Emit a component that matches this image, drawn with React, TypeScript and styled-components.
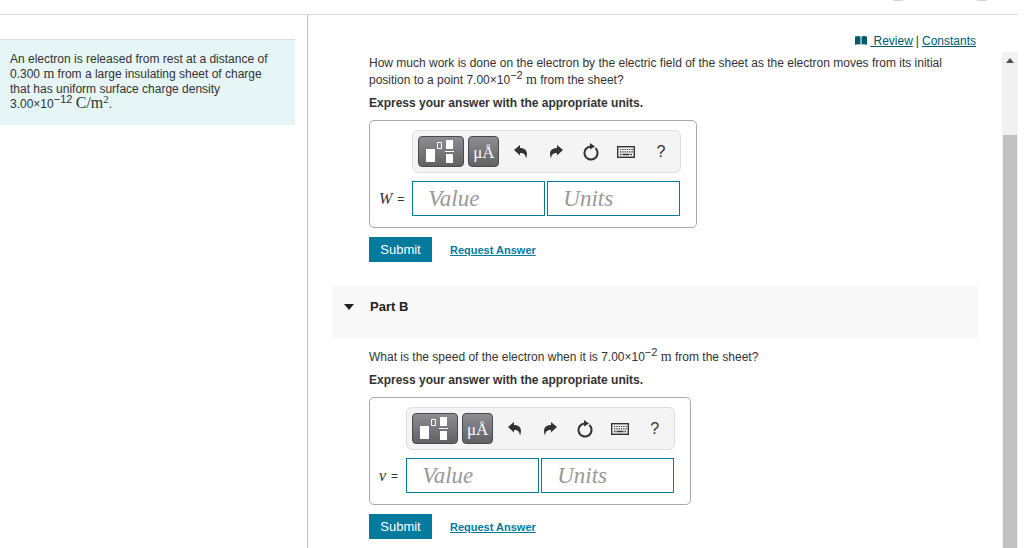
import React from "react";
import styled, { createGlobalStyle } from "styled-components";

const Global = createGlobalStyle`
  *, *::before, *::after { box-sizing: border-box; }
  html, body, #root { height: 100%; }
  body {
    margin: 0;
    overflow: hidden;
    background: #fff;
    color: #333;
    font: 12px/16px "Liberation Sans", Arial, sans-serif;
  }
`;

const Page = styled.div`
  display: flex;
  flex-direction: column;
  height: 100vh;
  padding-right: 6px;
`;

const TopBar = styled.header`
  display: flex;
  justify-content: flex-end;
  align-items: flex-start;
  gap: 74px;
  flex: none;
  height: 15px;
  padding-right: 31px;
  border-bottom: 1px solid #dcdcdc;
`;

const TopMark = styled.span`
  width: 10px;
  height: 1px;
  border-radius: 0 0 4px 4px;
  background: #d4d4d4;
`;

const Columns = styled.div`
  display: flex;
  flex: 1;
  min-height: 0;
`;

const Sidebar = styled.aside`
  flex: 0 0 308px;
  padding: 24px 12px 0 0;
  border-right: 1px solid #b9c3d3;
`;

const Problem = styled.p`
  margin: 0;
  padding: 12px 10px 13px;
  border-top: 1px solid #d8dede;
  background: #e6f5f6;
  line-height: 15px;
`;

const Main = styled.main`
  display: flex;
  flex-direction: column;
  flex: 1;
  min-width: 0;
`;

const Links = styled.nav`
  display: flex;
  align-items: center;
  justify-content: flex-end;
  gap: 3px;
  flex: none;
  height: 37px;
  padding: 14px 42px 0 0;
`;

const RefLink = styled.a`
  color: #005a70;
  white-space: pre;
`;

const ScrollArea = styled.div`
  display: flex;
  flex: 1;
  min-height: 0;
`;

const Content = styled.div`
  flex: 1;
  min-width: 0;
  padding: 0 24px;
  overflow: hidden;
`;

const Track = styled.div`
  display: flex;
  flex-direction: column;
  align-items: center;
  flex: none;
  width: 16px;
  padding-top: 6px;
  background: #f1f1f1;
`;

const Thumb = styled.div`
  flex: 1;
  width: 14px;
  margin-top: 72px;
  background: #c1c1c1;
`;

const Part = styled.section<{ $first?: boolean }>`
  padding: ${(p) => (p.$first ? 3 : 11)}px 0 24px 37px;
`;

const PartHeader = styled.h2`
  display: flex;
  align-items: flex-start;
  gap: 16px;
  height: 52px;
  margin: 0;
  padding: 13px 12px;
  background: #f8f8f8;
  color: #222;
  font-size: 13px;
  line-height: 16px;
`;

const Toggle = styled.button`
  display: flex;
  align-items: center;
  height: 16px;
  padding: 0;
  border: 0;
  background: none;
`;

const Question = styled.p`
  margin: 0 0 6px;
  line-height: 17px;
`;

const Instruction = styled.p`
  margin: 0 0 9px;
  font-weight: bold;
`;

const Unit = styled.span<{ $size?: number }>`
  font-family: "Liberation Serif", "Times New Roman", serif;
  font-size: ${(p) => p.$size ?? 14}px;
  line-height: 1px;
`;

const Sup = styled.sup`
  font-size: 11px;
  line-height: 1px;
  vertical-align: 5px;
`;

const AnswerBox = styled.div`
  display: flex;
  align-items: flex-end;
  width: fit-content;
  padding: 9px 15px 11px 9px;
  border: 1px solid #a9a9a9;
  border-radius: 5px;
`;

const Variable = styled.span`
  display: flex;
  align-items: center;
  gap: 5px;
  height: 35px;
  padding-right: 8px;
`;

const Italic = styled.i`
  font-family: "Liberation Serif", "Times New Roman", serif;
  font-size: 16px;
`;

const Entry = styled.div`
  display: flex;
  flex-direction: column;
  gap: 8px;
`;

const Toolbar = styled.div`
  display: flex;
  align-items: center;
  height: 43px;
  padding: 0 2px 0 5px;
  border: 1px solid #dedede;
  border-radius: 6px;
  background: #f4f4f4;
`;

const DarkButton = styled.button<{ $wide?: boolean }>`
  display: flex;
  align-items: center;
  justify-content: center;
  width: ${(p) => (p.$wide ? 46 : 31)}px;
  height: 31px;
  margin-right: 4px;
  padding: ${(p) => (p.$wide ? 0 : 3)}px 0 0;
  border: 1px solid #4a4a4c;
  border-radius: 4px;
  background: linear-gradient(#8d8d92, #626265);
  color: #fff;
  font: 17px/20px "Liberation Serif", "Times New Roman", serif;
`;

const IconButton = styled.button`
  display: flex;
  align-items: center;
  justify-content: center;
  width: 35px;
  height: 31px;
  padding: 0;
  border: 0;
  background: none;
  color: #333;
  font: 16px/20px "Liberation Sans", Arial, sans-serif;
`;

const Fields = styled.div`
  display: flex;
  gap: 2px;
`;

const Field = styled.input`
  width: 133px;
  height: 35px;
  padding: 0 15px;
  border: 1px solid #047a9c;
  border-radius: 0;
  background: #fff;
  font: italic 23px/30px "Liberation Serif", "Times New Roman", serif;

  &::placeholder {
    color: #999;
    opacity: 1;
  }
`;

const Actions = styled.div`
  display: flex;
  align-items: center;
  gap: 18px;
  margin-top: 9px;
`;

const Submit = styled.button`
  width: 63px;
  height: 25px;
  padding: 0;
  border: 0;
  background: #047a9c;
  color: #fff;
  font: 13px/16px "Liberation Sans", Arial, sans-serif;
`;

const Request = styled.a`
  color: #047a9c;
  font-size: 11px;
  line-height: 14px;
  font-weight: bold;
`;

const BookIcon = () => (
  <svg width="12" height="9" viewBox="0 0 12 9" aria-hidden="true">
    <path d="M0 .5Q3 -.3 5.500 .5V8.500Q3 7.800 0 8.800ZM6.500 .5Q9 -.3 12 .5V8.800Q9 7.800 6.500 8.500Z" fill="#005a70" />
  </svg>
);

const TemplateIcon = () => (
  <svg width="30" height="24" viewBox="0 0 30 24" aria-hidden="true">
    <path d="M0 9H9V22H0ZM20 0H27V9H20ZM20 14H27V23H20ZM19 11H28V12H19Z" fill="#fff" />
    <path d="M11.500 2.500H15.500V8.500H11.500Z" fill="none" stroke="#fff" />
  </svg>
);

const ArrowIcon = ({ flip }: { flip?: boolean }) => (
  <svg width="14" height="14" viewBox="0 0 14 14" aria-hidden="true">
    <path
      d="M0 5 6 0V3C12 3 14.500 7 12 13.500C11.500 9.500 10 8 6 8V10.500Z"
      fill="#333"
      transform={flip ? "translate(14 0) scale(-1 1)" : undefined}
    />
  </svg>
);

const ResetIcon = () => (
  <svg width="16" height="18" viewBox="0 0 16 18" aria-hidden="true">
    <path d="M8.500 3.500A6.500 6.500 0 1 0 12.300 5.100" fill="none" stroke="#333" strokeWidth="2" />
    <path d="M7 0 12 3.400 7 6.500Z" fill="#333" />
  </svg>
);

const KeyboardIcon = () => (
  <svg width="18" height="12" viewBox="0 0 18 12" aria-hidden="true">
    <rect x="0.700" y="0.700" width="16.600" height="10.600" fill="none" stroke="#333" strokeWidth="1.400" />
    <path d="M3 3.500H16M3 5.800H16" stroke="#333" strokeWidth="1.200" strokeDasharray="1.300 1" />
    <path d="M3 8.500H4.500M5.500 8.500H12.500M13.500 8.500H15" stroke="#333" strokeWidth="1.300" />
  </svg>
);

const Answer = ({ symbol }: { symbol: string }) => (
  <form onSubmit={(e) => e.preventDefault()}>
    <AnswerBox>
      <Variable>
        <Italic>{symbol}</Italic> =
      </Variable>
      <Entry>
        <Toolbar>
          <DarkButton type="button" $wide aria-label="Templates">
            <TemplateIcon />
          </DarkButton>
          <DarkButton type="button">μÅ</DarkButton>
          <IconButton type="button" aria-label="Undo">
            <ArrowIcon />
          </IconButton>
          <IconButton type="button" aria-label="Redo">
            <ArrowIcon flip />
          </IconButton>
          <IconButton type="button" aria-label="Reset">
            <ResetIcon />
          </IconButton>
          <IconButton type="button" aria-label="Keyboard shortcuts">
            <KeyboardIcon />
          </IconButton>
          <IconButton type="button">?</IconButton>
        </Toolbar>
        <Fields>
          <Field placeholder="Value" aria-label={`${symbol} value`} />
          <Field placeholder="Units" aria-label={`${symbol} units`} />
        </Fields>
      </Entry>
    </AnswerBox>
    <Actions>
      <Submit type="submit">Submit</Submit>
      <Request href="#request">Request Answer</Request>
    </Actions>
  </form>
);

export default function App() {
  return (
    <Page>
      <Global />
      <TopBar>
        <TopMark />
        <TopMark />
      </TopBar>
      <Columns>
        <Sidebar>
          <Problem>
            An electron is released from rest at a distance of 0.300 <Unit>m</Unit> from a large
            insulating sheet of charge that has uniform surface charge density 3.00×10
            <Sup>−12</Sup>{" "}
            <Unit $size={16}>
              C/m<Sup>2</Sup>
            </Unit>
            .
          </Problem>
        </Sidebar>
        <Main>
          <Links>
            <BookIcon />
            <RefLink href="#review"> Review</RefLink>|<RefLink href="#constants">Constants</RefLink>
          </Links>
          <ScrollArea>
            <Content>
              <Part $first>
                <Question>
                  How much work is done on the electron by the electric field of the sheet as the
                  electron moves from its initial position to a point 7.00×10<Sup>−2</Sup>{" "}
                  <Unit>m</Unit> from the sheet?
                </Question>
                <Instruction>Express your answer with the appropriate units.</Instruction>
                <Answer symbol="W" />
              </Part>
              <PartHeader>
                <Toggle type="button" aria-label="Collapse Part B">
                  <svg width="10" height="6" viewBox="0 0 10 6" aria-hidden="true">
                    <path d="M0 0H10L5 6Z" fill="#222" />
                  </svg>
                </Toggle>
                Part B
              </PartHeader>
              <Part>
                <Question>
                  What is the speed of the electron when it is 7.00×10<Sup>−2</Sup> <Unit>m</Unit>{" "}
                  from the sheet?
                </Question>
                <Instruction>Express your answer with the appropriate units.</Instruction>
                <Answer symbol="v" />
              </Part>
            </Content>
            <Track aria-hidden="true">
              <svg width="8" height="5" viewBox="0 0 8 5">
                <path d="M0 5 4 0 8 5Z" fill="#505050" />
              </svg>
              <Thumb />
            </Track>
          </ScrollArea>
        </Main>
      </Columns>
    </Page>
  );
}
